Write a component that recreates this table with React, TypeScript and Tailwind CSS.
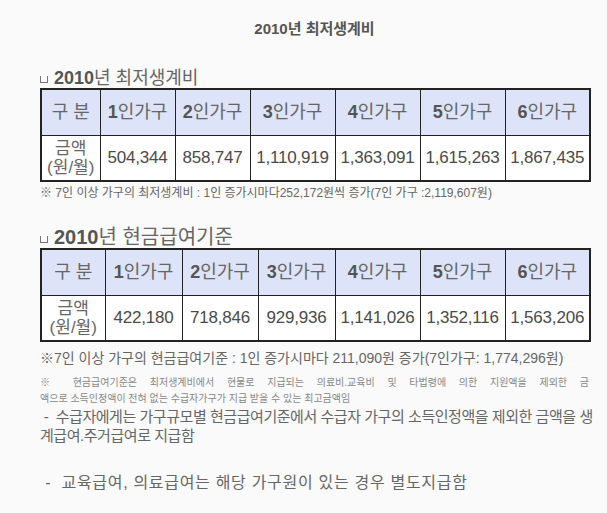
const font = { fontFamily: '"Liberation Sans", "Noto Sans CJK KR", sans-serif' };

const heads = ["1", "2", "3", "4", "5", "6"];

type TableProps = {
  widths: string[];
  values: string[];
};

function CostTable({ widths, values }: TableProps) {
  return (
    <table className="w-[549px] table-fixed border-collapse border-2 border-[#222]">
      <colgroup>
        {widths.map((w, i) => (
          <col key={i} className={w} />
        ))}
      </colgroup>
      <tbody>
        <tr className="h-[46px] bg-[#dde3f8]">
          <td className="border border-[#222] text-center text-[18px] text-[#666]">구 분</td>
          {heads.map((h) => (
            <td key={h} className="border border-[#222] text-center text-[18px] text-[#666] whitespace-nowrap">
              <b className="text-[#555]">{h}</b>인가구
            </td>
          ))}
        </tr>
        <tr className="h-[46px] bg-white">
          <td className="border border-[#222] text-center text-[17px] leading-[19px] text-[#666]">
            금액
            <br />
            (원/월)
          </td>
          {values.map((v) => (
            <td key={v} className="border border-[#222] text-center text-[17px] text-[#4a4a4a] whitespace-nowrap tracking-[-0.2px]">
              {v}
            </td>
          ))}
        </tr>
      </tbody>
    </table>
  );
}

function Heading({ children, size }: { children: React.ReactNode; size: string }) {
  return (
    <div className={`flex items-end text-[#555] ${size}`}>
      <span className="mb-[5px] mr-[6px] inline-block h-[7px] w-[8px] border border-t-0 border-[#777]" />
      <b className="text-[#555]">2010</b>
      <span className="text-[#666]">{children}</span>
    </div>
  );
}

export default function App() {
  return (
    <div className="min-h-[513px] w-[607px] bg-[#fafafa] pl-[40px] pt-[19px]" style={font}>
      <div className="w-[549px] text-center text-[15px] leading-[20px] text-[#555]">
        <b>2010</b>
        <b className="font-semibold">년 최저생계비</b>
      </div>

      <div className="mt-[29px]">
        <Heading size="text-[18px] leading-[20px]">년 최저생계비</Heading>
      </div>
      <CostTable
        widths={["w-[59px]", "w-[75px]", "w-[75px]", "w-[85px]", "w-[85px]", "w-[85px]", "w-[85px]"]}
        values={["504,344", "858,747", "1,110,919", "1,363,091", "1,615,263", "1,867,435"]}
      />
      <div className="mt-[2px] text-[12px] leading-[18px] text-[#666]">
        ※ 7인 이상 가구의 최저생계비 : 1인 증가시마다252,172원씩 증가(7인 가구 :2,119,607원)
      </div>

      <div className="mt-[24px]">
        <Heading size="text-[20px] leading-[22px]">년 현금급여기준</Heading>
      </div>
      <CostTable
        widths={["w-[64px]", "w-[77px]", "w-[76px]", "w-[77px]", "w-[85px]", "w-[85px]", "w-[85px]"]}
        values={["422,180", "718,846", "929,936", "1,141,026", "1,352,116", "1,563,206"]}
      />
      <div className="mt-[7px] text-[14px] leading-[18px] text-[#666]">
        ※7인 이상 가구의 현금급여기준 : 1인 증가시마다 211,090원 증가(7인가구: 1,774,296원)
      </div>

      <div className="mt-[8px] w-[549px] text-[10px] leading-[16px] text-[#888]">
        <div className="text-justify [text-align-last:justify]">
          ※ 현금급여기준은 최저생계비에서 현물로 지급되는 의료비.교육비 및 타법령에 의한 지원액을 제외한 금
        </div>
        <div>액으로 소득인정액이 전혀 없는 수급자가구가 지급 받을 수 있는 최고금액임</div>
      </div>

      <div className="w-[560px] text-[15px] leading-[19px] tracking-[-0.45px] text-[#666]">
        <div className="whitespace-nowrap">
          &nbsp;- &nbsp;수급자에게는 가구규모별 현금급여기준에서 수급자 가구의 소득인정액을 제외한 금액을 생
        </div>
        <div>계급여.주거급여로 지급함</div>
      </div>

      <div className="mt-[27px] text-[16px] leading-[22px] tracking-[0.7px] text-[#666]">
        &nbsp;- &nbsp;교육급여, 의료급여는 해당 가구원이 있는 경우 별도지급함
      </div>
    </div>
  );
}
